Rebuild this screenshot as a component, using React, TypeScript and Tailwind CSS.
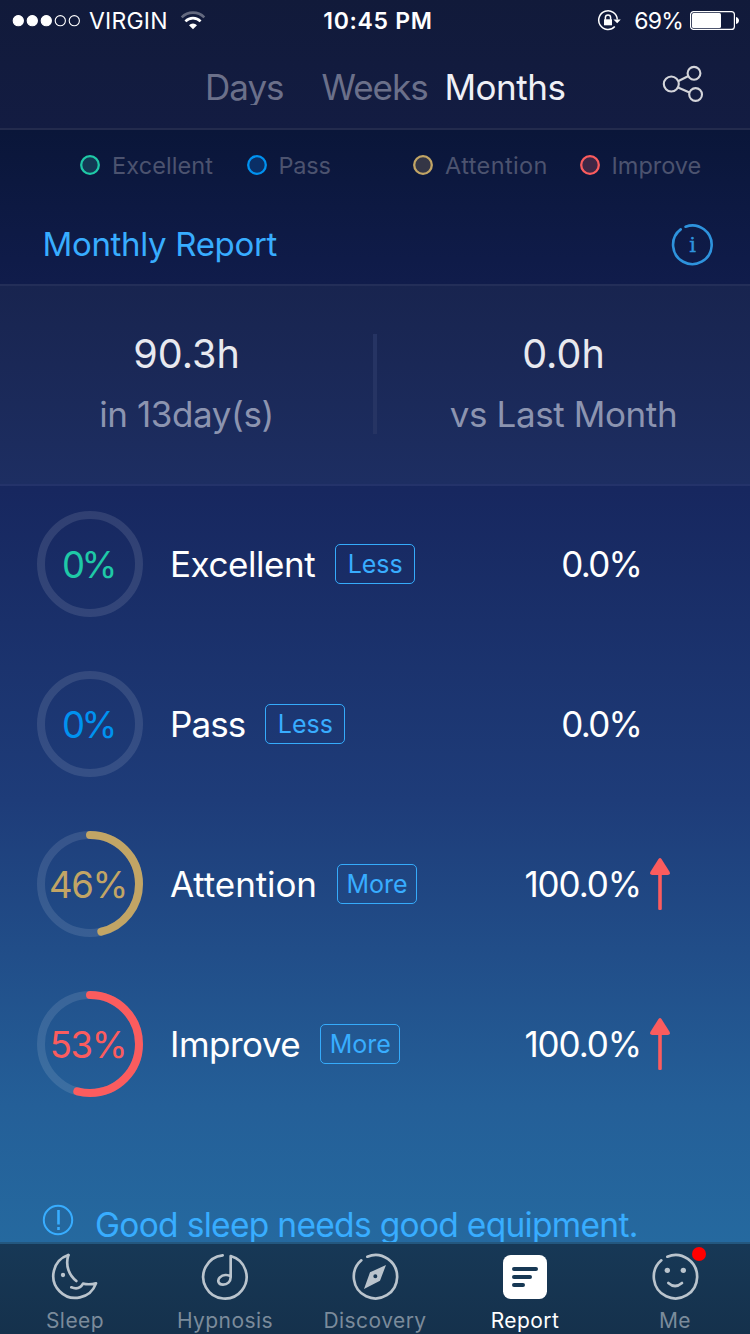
import type { ReactNode } from 'react';

interface Level {
    name: string;
    color: string;
    fill: string;
    percent: number;
    arc: number;
    tag: 'Less' | 'More';
    change: string;
    up: boolean;
    legendTracking: string;
    titleTracking: string;
}

const levels: Level[] = [
    { name: 'Excellent', color: '#1fc9a7', fill: '#133a54', percent: 0, arc: 0, tag: 'Less', change: '0.0%', up: false, legendTracking: 'tracking-[0.1px]', titleTracking: 'tracking-[-0.45px]' },
    { name: 'Pass', color: '#0092f0', fill: '#0a2f66', percent: 0, arc: 0, tag: 'Less', change: '0.0%', up: false, legendTracking: 'tracking-[-0.2px]', titleTracking: 'tracking-[-0.9px]' },
    { name: 'Attention', color: '#c2a565', fill: '#343646', percent: 46, arc: 0.462, tag: 'More', change: '100.0%', up: true, legendTracking: 'tracking-[0.4px]', titleTracking: 'tracking-[-0.1px]' },
    { name: 'Improve', color: '#fb5c5e', fill: '#3f2746', percent: 53, arc: 0.541, tag: 'More', change: '100.0%', up: true, legendTracking: 'tracking-[0px]', titleTracking: 'tracking-[-0.5px]' },
];

const StatusBar = () => (
    <div className="grid h-[42px] shrink-0 grid-cols-3 items-center text-[23px] text-white">
        <div className="flex items-center pl-3">
            <svg width="70" height="14" viewBox="0 0 70 14" fill="none" stroke="#fff" strokeWidth="1.1">
                {[6.3, 20.3, 34.3].map((x) => (
                    <circle key={x} cx={x} cy="6.7" r="5.1" fill="#fff" />
                ))}
                {[48.3, 62.3].map((x) => (
                    <circle key={x} cx={x} cy="6.7" r="5.1" />
                ))}
            </svg>
            <span className="ml-[7px] pt-px tracking-[0.2px]">VIRGIN</span>
            <svg className="ml-[12px]" width="26" height="20" viewBox="0 0 26 20" fill="none" stroke="#fff" strokeWidth="2.6">
                <path d="M1.7 6.3a16 16 0 0 1 22.6 0" opacity="0.35" />
                <path d="M5.4 10.3a10.8 10.8 0 0 1 15.2 0" />
                <path d="M9 14.2a5.7 5.7 0 0 1 8 0L13 18.2z" fill="#fff" stroke="none" />
            </svg>
        </div>
        <div className="pt-px pl-[6px] text-center font-semibold tracking-[0.7px]">10:45 PM</div>
        <div className="flex items-center justify-end pr-[11px]">
            <svg width="24" height="22" viewBox="0 0 24 22" fill="none" stroke="#fff" strokeWidth="1.5">
                <path d="M17.8 16.5A9.3 9.3 0 1 1 20.3 9.5" />
                <path d="M16.4 9.5h7.4l-3.6 3.7z" fill="#fff" stroke="none" />
                <path d="M7 9.3h8v6H7z" fill="#fff" stroke="none" />
                <path d="M8.4 9.8V7.5a2.6 2.6 0 0 1 5.2 0V9.8" />
            </svg>
            <span className="ml-[13px] pt-px tracking-[-0.8px]">69%</span>
            <svg className="-mt-[2px] ml-[7px]" width="49" height="19" viewBox="0 0 49 19">
                <rect x="0.6" y="0.6" width="43.8" height="17.8" rx="3" fill="none" stroke="#fff" strokeWidth="1.2" />
                <rect x="2" y="2" width="29" height="15" rx="1.5" fill="#fff" />
                <path d="M46 6c4 1 4 6 0 7z" fill="#fff" />
            </svg>
        </div>
    </div>
);

const Header = () => (
    <header className="h-[130px] shrink-0 border-b-2 border-[#232b4d] bg-gradient-to-b from-[#111a3a] to-[#131c42]">
        <StatusBar />
        <div className="flex h-[63px] items-end pl-[205px] text-[35px] leading-[36px] text-[#6b708a]">
            {/* the descender of "Days" is cut by its box */}
            <span className="h-[36px] w-[116.5px] overflow-hidden tracking-[-1px]">Days</span>
            <span className="h-[36px] w-[123px] tracking-[-1px]">Weeks</span>
            <span className="h-[36px] w-[216.5px] tracking-[-0.5px] text-[#eff0f6]">Months</span>
            <svg className="mb-[2px]" width="44" height="38" viewBox="661 65 44 38" fill="none" stroke="#d4d5da" strokeWidth="2.1">
                <path d="M678 81.2l10-5M678 87.5l11.5 5" />
                <circle cx="671.3" cy="84" r="7.5" />
                <circle cx="694" cy="73.3" r="6.4" />
                <circle cx="695.6" cy="94.5" r="6.4" />
            </svg>
        </div>
    </header>
);

const Legend = () => (
    <div className="flex h-[70px] shrink-0 items-center pl-[80px] text-[23.5px] text-[#4c536f]">
        {levels.map((level) => (
            <div key={level.name} className={`flex w-[166.5px] shrink-0 items-center gap-3 ${level.legendTracking}`}>
                <svg width="20" height="20">
                    <circle cx="10" cy="10" r="8.8" fill={level.fill} stroke={level.color} strokeWidth="2.3" />
                </svg>
                <span className="pt-px">{level.name}</span>
            </div>
        ))}
    </div>
);

const ReportTitle = () => (
    <div className="flex h-[86px] shrink-0 items-center justify-between border-b-2 border-[#232e58] pt-[5px] pr-[37px] pl-[42.5px]">
        <h1 className="text-[33px] tracking-[-0.33px] text-[#38adff]">Monthly Report</h1>
        <svg width="42" height="42" viewBox="0 0 42 42" fill="none" stroke="#2e93dd" strokeWidth="2.6" strokeLinecap="round">
            <path d="M14.6 2.7A19.3 19.3 0 1 1 9.7 5.4" />
            <text x="21.5" y="28" textAnchor="middle" fontSize="21" fill="#2e93dd" strokeWidth="0.4" fontFamily="DejaVu Serif, serif">
                i
            </text>
        </svg>
    </div>
);

const Stat = ({ value, label }: { value: string; label: string }) => (
    <div className="flex flex-1 flex-col items-center">
        <div className="h-[60px] text-[39.5px] leading-[61px] text-[#e8e9ef]">{value}</div>
        <div className="h-[60px] text-[35px] leading-[60px] tracking-[-0.4px] text-[#8c94b0]">{label}</div>
    </div>
);

const Summary = () => (
    <div className="flex h-[200px] shrink-0 border-b-2 border-[#24336a] bg-gradient-to-b from-[#18244f] to-[#1d2e62] pt-[38px]">
        <Stat value="90.3h" label="in 13day(s)" />
        <div className="mt-[10px] h-[100px] w-1 bg-[#263463]" />
        <Stat value="0.0h" label="vs Last Month" />
    </div>
);

const Ring = ({ level }: { level: Level }) => {
    const length = 2 * Math.PI * 49;
    return (
        <div className="grid size-[106px] place-items-center">
            <svg className="col-start-1 row-start-1" width="106" height="106" fill="none" strokeWidth="8">
                <circle cx="53" cy="53" r="49" stroke="#fff" opacity="0.11" />
                {level.arc > 0 && (
                    <circle
                        cx="53"
                        cy="53"
                        r="49"
                        stroke={level.color}
                        strokeLinecap="round"
                        strokeDasharray={`${length * level.arc} ${length}`}
                        transform="rotate(-90 53 53)"
                    />
                )}
            </svg>
            <span
                className={`col-start-1 row-start-1 pt-[2px] pr-[4px] text-[36.5px] ${level.percent > 0 ? 'tracking-[-1.3px]' : 'tracking-[-3.5px]'}`}
                style={{ color: level.color }}
            >
                {level.percent}%
            </span>
        </div>
    );
};

const LevelRow = ({ level }: { level: Level }) => (
    <div className="flex h-40 items-center pl-[37px] text-[35px] text-white">
        <Ring level={level} />
        <span className={`ml-[27px] pt-px ${level.titleTracking}`}>{level.name}</span>
        <span className="ml-[20px] flex h-10 w-20 items-center justify-center rounded-[5px] border-[1.5px] border-[#35abfb] pt-[2px] text-[25px] text-[#38adff]">
            {level.tag}
        </span>
        <span className={`ml-auto pt-px ${level.up ? 'tracking-[-1.1px]' : 'tracking-[-1.8px]'}`}>{level.change}</span>
        <div className="w-[109px] pl-[8px]">
            {level.up && (
                <svg width="22" height="54" viewBox="0 0 22 54" fill="#fb5c5e">
                    <path d="M9.5 1.9q1.5-2 3 0L20.7 15q.8 3-2 3H3.3q-2.8 0-2-3z" />
                    <rect x="9.2" y="14" width="3.6" height="39" rx="1.2" />
                </svg>
            )}
        </div>
    </div>
);

const Tip = () => (
    <div className="flex h-[40px] shrink-0 items-start overflow-hidden pl-[42px] text-[33.5px] leading-[47px] text-[#38adff]">
        <svg className="mt-[2px]" width="32" height="32" viewBox="0 0 32 32" fill="none" stroke="#38adff" strokeWidth="2">
            <circle cx="16" cy="16" r="14.2" />
            <path d="M16.5 6v14.5M16.5 23v3" strokeWidth="2.6" />
        </svg>
        <span className="ml-[21px] tracking-[-0.69px] whitespace-nowrap">Good sleep needs good equipment.</span>
    </div>
);

const TabItem = ({ label, viewBox, active, children }: { label: string; viewBox: string; active?: boolean; children: ReactNode }) => (
    <div className={`relative flex flex-1 flex-col items-center pt-[6px] text-[21px] tracking-[0.45px] ${active ? 'text-white' : 'text-[#7b8b9b]'}`}>
        <svg width="50" height="52" viewBox={viewBox} fill="none" stroke="#bac4cd" strokeWidth="8" strokeLinecap="round" strokeLinejoin="round">
            {children}
        </svg>
        <span className="mt-[5px] h-[27px] leading-[27px]">{label}</span>
        {label === 'Me' && <span className="absolute top-[3px] left-[92px] size-[14px] rounded-full bg-[#ff0000]" />}
    </div>
);

const TabBar = () => (
    <nav className="flex h-[92px] shrink-0 border-t-2 border-[#23577f] bg-gradient-to-b from-[#173856] to-[#15314c]">
        <TabItem label="Sleep" viewBox="150 180 150 156">
            <path d="M205 195A66 66 0 1 0 288 280Q268 285 249 281C243 292 232 299 214 292" />
            <path d="M205 195C195 228 208 256 229 273" />
            <circle cx="189" cy="255" r="6.5" fill="#bac4cd" stroke="none" />
        </TabItem>
        <TabItem label="Hypnosis" viewBox="600 180 150 156">
            <path d="M668 196A65 65 0 1 0 692 198V262C692 275 682 284 669 284C654 284 651 270 660 262C668 254 684 252 692 260" />
        </TabItem>
        <TabItem label="Discovery" viewBox="150 180 150 156">
            <path d="M202 200A65 65 0 1 1 184 211" />
            <path d="M258 225L240 272L192 297L210 247zM232 259a6 6 0 1 0-12 0a6 6 0 1 0 12 0z" fill="#bac4cd" fillRule="evenodd" stroke="none" />
        </TabItem>
        <TabItem label="Report" viewBox="600 180 150 156" active>
            <rect x="609" y="195" width="132" height="132" rx="23" fill="#fff" stroke="none" />
            <path d="M642 237H708M642 261H690M642 285H669" stroke="#173854" strokeWidth="12" />
        </TabItem>
        <TabItem label="Me" viewBox="300 180 150 156">
            <path d="M352 200A65 65 0 1 1 334 211" />
            <path d="M355 279Q375 297 396 279" />
            <circle cx="352" cy="241" r="8" fill="#bac4cd" stroke="none" />
            <circle cx="400" cy="241" r="8" fill="#bac4cd" stroke="none" />
        </TabItem>
    </nav>
);

export default function App() {
    return (
        <div className="flex h-[1334px] w-[750px] flex-col overflow-hidden bg-[linear-gradient(180deg,#0a1639_130px,#101c4b_284px,#17275f_490px,#1e3c79_800px,#245f98_1105px,#25699f_1242px)] font-['Inter',sans-serif]">
            <Header />
            <Legend />
            <ReportTitle />
            <Summary />
            <div className="-mt-[2px] h-[718px] shrink-0">
                {levels.map((level) => (
                    <LevelRow key={level.name} level={level} />
                ))}
            </div>
            <Tip />
            <TabBar />
        </div>
    );
}
